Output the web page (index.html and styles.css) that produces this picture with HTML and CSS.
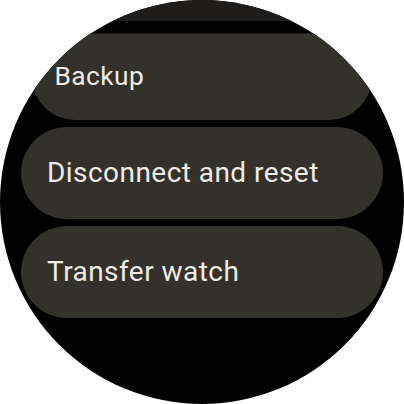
FILE: index.html
```html
<!DOCTYPE html>
<html>
<head>
<meta charset="utf-8">
<link rel="stylesheet" href="styles.css">
</head>
<body>
<div class="watch">
  <div class="list">
    <div class="chip chip-far"></div>
    <div class="chip chip-near"><span class="label">Backup</span></div>
    <div class="chip"><span class="label">Disconnect and reset</span></div>
    <div class="chip"><span class="label">Transfer watch</span></div>
  </div>
</div>
</body>
</html>
```
FILE: styles.css
```css
html, body {
  margin: 0;
  padding: 0;
  background: #ffffff;
}
.watch {
  width: 404px;
  height: 404px;
  border-radius: 50%;
  background: #000000;
  overflow: hidden;
}
.list {
  display: flex;
  flex-direction: column;
  gap: 7px;
  padding: 0 21px;
  margin-top: -71px;
}
.chip {
  height: 92px;
  border-radius: 46px;
  background: #32312c;
  display: flex;
  align-items: center;
  padding-left: 26px;
  padding-bottom: 2px;
  box-sizing: border-box;
}
.label {
  font-family: Roboto, "Noto Sans", sans-serif;
  font-size: 28px;
  color: #efebe3;
  letter-spacing: 0.45px;
}
.chip-near {
  transform: scale(0.94);
  transform-origin: center bottom;
  padding-left: 24px;
}
.chip-far {
  transform: scale(0.86);
  transform-origin: center bottom;
  background: #1e1d1b;
}
```
